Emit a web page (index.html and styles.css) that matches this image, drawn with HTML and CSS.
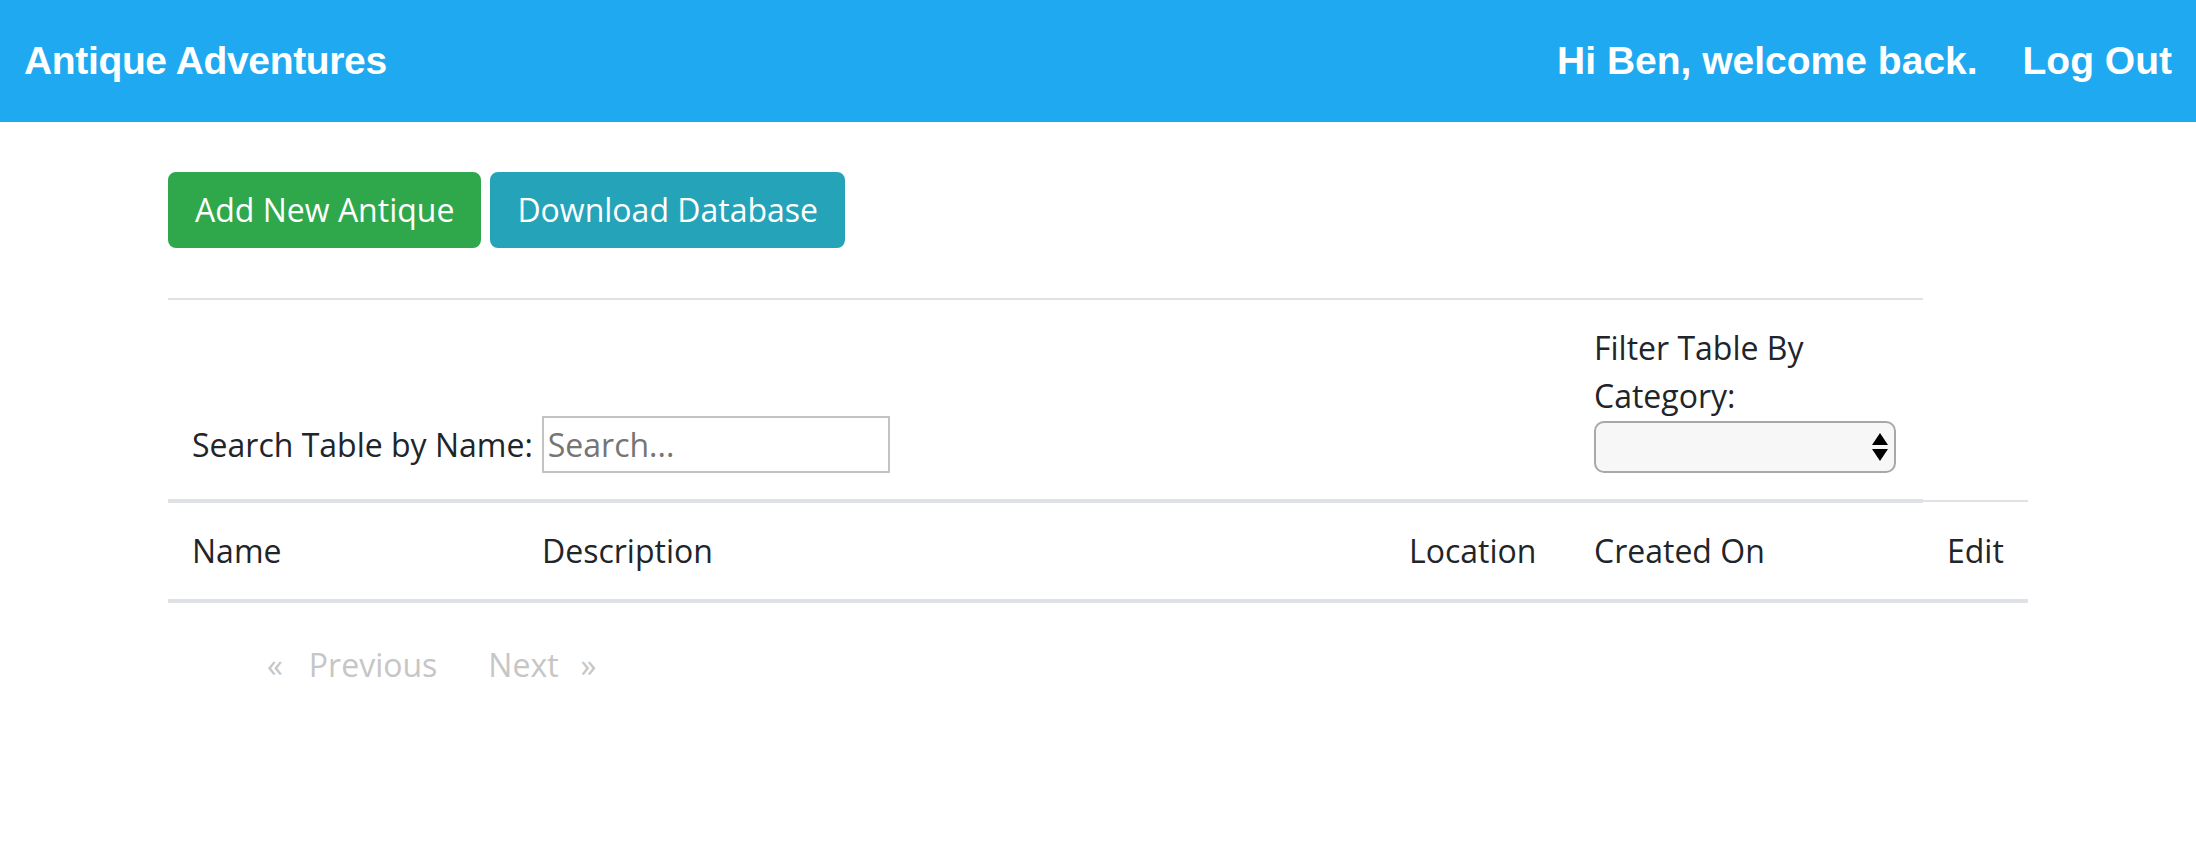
FILE: index.html
```html
<!DOCTYPE html>
<html lang="en">
<head>
<meta charset="utf-8">
<title>Antique Adventures</title>
<link rel="stylesheet" href="styles.css">
</head>
<body>
<header class="navbar">
  <a class="brand" href="#">Antique Adventures</a>
  <div class="nav-right">
    <span class="greeting">Hi Ben, welcome back.</span>
    <a class="logout" href="#">Log Out</a>
  </div>
</header>
<main class="container">
  <div class="actions">
    <button class="btn btn-success">Add New Antique</button>
    <button class="btn btn-info">Download Database</button>
  </div>
  <table class="table">
    <colgroup>
      <col class="c-name"><col class="c-desc"><col class="c-loc"><col class="c-date"><col class="c-edit">
    </colgroup>
    <thead>
      <tr class="tools">
        <th colspan="3">
          <div class="search">
            <label class="search-label" for="q">Search Table by Name:</label>
            <input id="q" class="search-input" type="text" placeholder="Search...">
          </div>
        </th>
        <th>
          <label class="filter-label" for="cat">Filter Table By Category:</label>
          <div class="select-wrap">
            <select id="cat" class="select"><option></option></select>
            <svg class="select-arrows" width="16" height="28" viewBox="0 0 16 28"><polygon points="0,12 8,0 16,12" fill="#000"/><polygon points="0,16 16,16 8,28" fill="#000"/></svg>
          </div>
        </th>
      </tr>
      <tr class="heads">
        <th>Name</th>
        <th>Description</th>
        <th>Location</th>
        <th>Created On</th>
        <th>Edit</th>
      </tr>
    </thead>
    <tbody></tbody>
  </table>
  <nav class="pager">
    <span class="pg-arrow pg-first">«</span>
    <span class="pg-label">Previous</span>
    <span class="pg-label pg-next">Next</span>
    <span class="pg-arrow pg-last">»</span>
  </nav>
</main>
</body>
</html>
```
FILE: styles.css
```css
* { box-sizing: border-box; }
html, body { margin: 0; padding: 0; }
body {
  font-family: "Open Sans", "Noto Sans", sans-serif;
  font-size: 32px;
  line-height: 48px;
  color: #212529;
  background: #fff;
}
.navbar {
  height: 122px;
  background: #1fa9f1;
  display: flex;
  align-items: center;
  justify-content: space-between;
  padding: 0 24px 0 24px;
  font-family: "Liberation Sans", Arial, sans-serif;
  font-weight: bold;
  font-size: 39px;
  line-height: normal;
  color: #fff;
}
.brand { color: #fff; text-decoration: none; letter-spacing: -0.35px; }
.nav-right { display: flex; align-items: center; gap: 45px; }
.logout { color: #fff; text-decoration: none; }

.container {
  max-width: 1920px;
  margin: 0 auto;
  padding: 0 30px;
}
.actions {
  display: flex;
  gap: 9px;
  margin-top: 50px;
  margin-bottom: 50px;
}
.btn {
  font-family: inherit;
  font-size: 32px;
  line-height: 48px;
  padding: 12px 25px;
  border: 2px solid transparent;
  border-radius: 8px;
  color: #fff;
  cursor: pointer;
}
.btn-success { background: #2ea84b; border-color: #2ea84b; }
.btn-info { background: #25a3b9; border-color: #25a3b9; }

.table {
  width: 100%;
  table-layout: fixed;
  border-collapse: collapse;
  margin: 0;
}
.c-name { width: 350px; }
.c-desc { width: 867px; }
.c-loc { width: 185px; }
.c-date { width: 353px; }
.c-edit { width: 105px; }
.table th {
  padding: 24px;
  border-top: 2px solid #dee2e6;
  border-bottom: 4px solid #dee2e6;
  vertical-align: bottom;
  text-align: left;
  font-weight: normal;
}
.search {
  display: flex;
  align-items: center;
  margin-bottom: 2px;
}
.search-label { margin-right: 9px; }
.search-input {
  width: 348px;
  height: 57px;
  font-family: inherit;
  font-size: 32px;
  line-height: 48px;
  padding: 2px 4px;
  border: 2px solid #c3c3c3;
  color: #212529;
  background: #fff;
  outline: none;
}
.search-input::placeholder { color: #757575; }
.filter-label { display: block; }
.select-wrap {
  position: relative;
  width: 302px;
  height: 52px;
  margin-top: 1px;
  margin-bottom: 2px;
}
.select {
  -webkit-appearance: none;
  appearance: none;
  width: 100%;
  height: 100%;
  background: #f7f7f7;
  border: 2px solid #a8a8a8;
  border-radius: 10px;
  font-family: inherit;
  font-size: 26px;
  display: block;
}
.select-arrows {
  position: absolute;
  left: 278px;
  top: 12px;
  pointer-events: none;
}

.pager {
  display: flex;
  align-items: center;
  margin-top: 38px;
  padding-left: 99px;
  color: #c6c6c6;
  font-size: 32px;
  line-height: 48px;
}
.pg-first { margin-right: 26px; }
.pg-next { margin-left: 51px; }
.pg-last { margin-left: 22px; }
```
